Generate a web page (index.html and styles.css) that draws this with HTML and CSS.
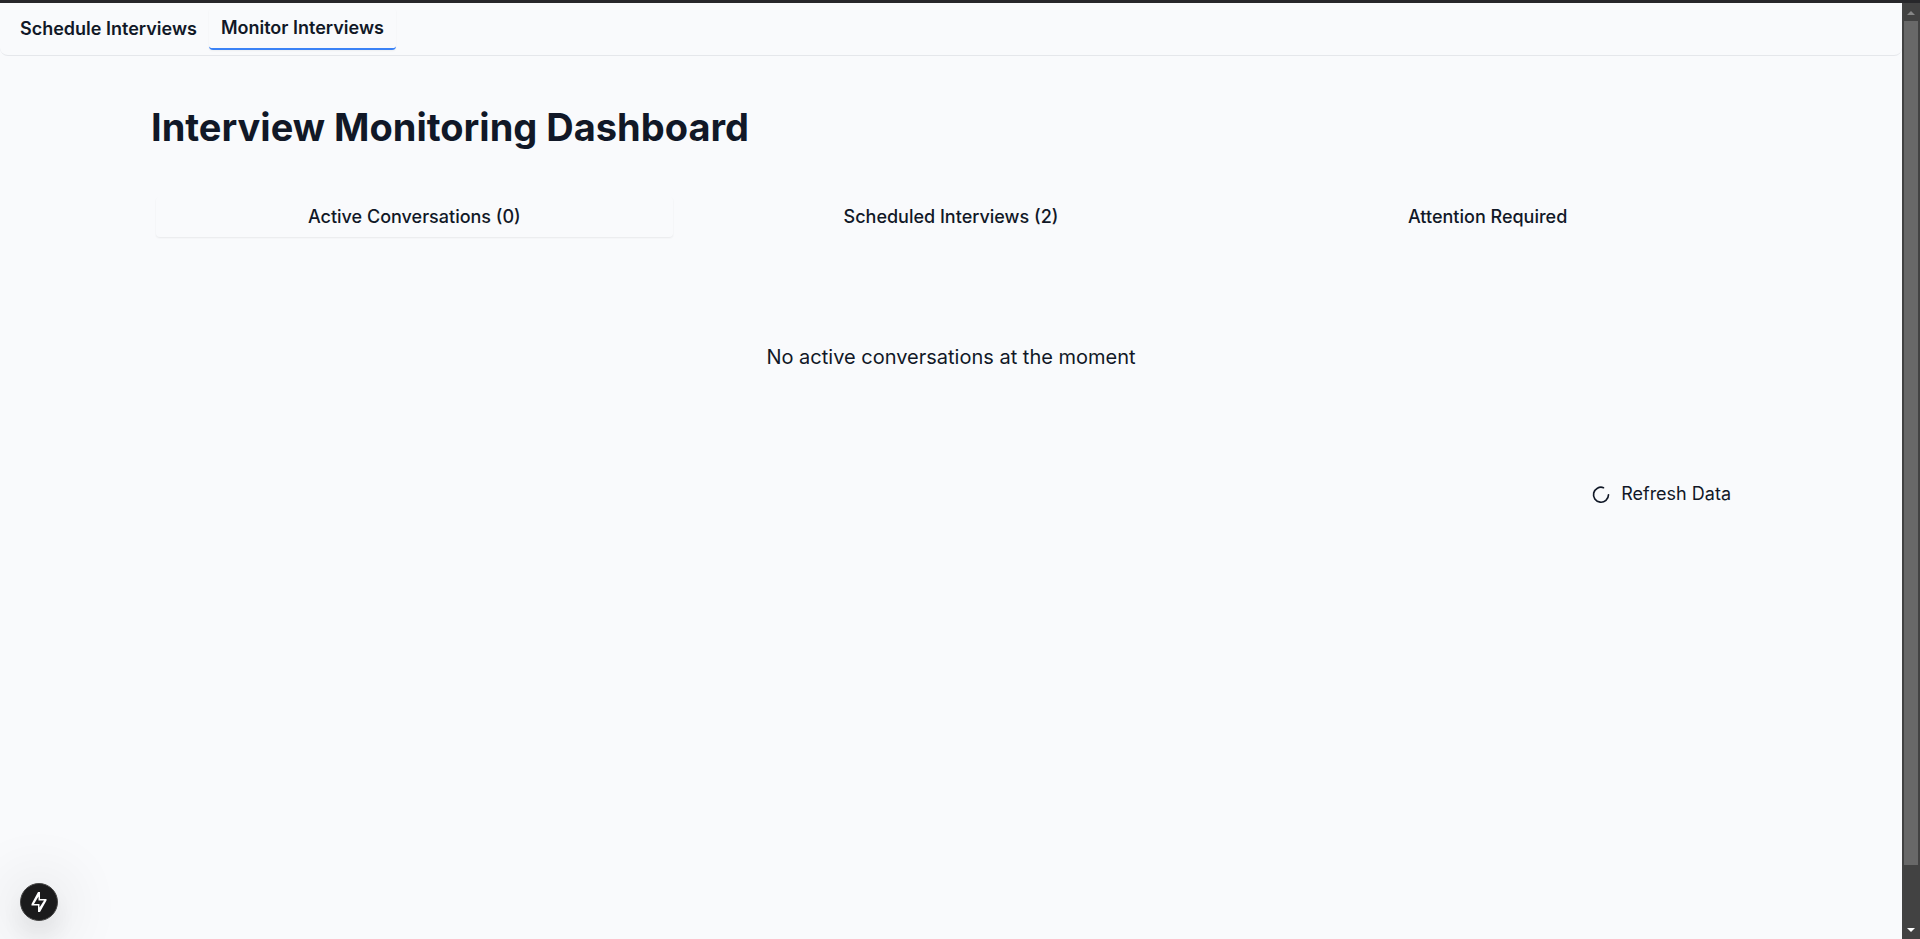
FILE: index.html
```html
<!DOCTYPE html>
<html lang="en">
<head>
<meta charset="utf-8">
<meta name="viewport" content="width=device-width, initial-scale=1">
<title>Interview Monitoring Dashboard</title>
<link rel="stylesheet" href="styles.css">
</head>
<body>
<div class="window">
  <div class="page">
    <nav class="topnav" aria-label="Main">
      <a class="topnav-link" href="#schedule">Schedule Interviews</a>
      <a class="topnav-link topnav-link-active" href="#monitor" aria-current="page">Monitor Interviews</a>
    </nav>
    <main class="content">
      <h1 class="title">Interview Monitoring Dashboard</h1>
      <div class="tabs" role="tablist">
        <button class="tab tab-active" type="button" role="tab" aria-selected="true">Active Conversations (0)</button>
        <button class="tab" type="button" role="tab" aria-selected="false">Scheduled Interviews (2)</button>
        <button class="tab" type="button" role="tab" aria-selected="false">Attention Required</button>
      </div>
      <p class="empty">No active conversations at the moment</p>
      <div class="actions">
        <button class="refresh" type="button">
          <svg class="refresh-icon" viewBox="0 0 24 24" fill="none" stroke="currentColor" stroke-width="2" stroke-linecap="round" stroke-linejoin="round" aria-hidden="true"><path d="M15 4.400A9 9 0 1 0 21 13"/></svg>
          Refresh Data
        </button>
      </div>
    </main>
  </div>
  <div class="scrollbar" aria-hidden="true">
    <svg class="arrow arrow-up" viewBox="0 0 8 4"><path d="M4 0 8 4H0Z"/></svg>
    <div class="thumb"></div>
    <svg class="arrow arrow-down" viewBox="0 0 8 4"><path d="M0 0H8L4 4Z"/></svg>
  </div>
</div>
<button class="devtools" type="button" aria-label="Developer tools">
  <svg class="bolt" viewBox="0 0 16 20" fill="currentColor" fill-rule="evenodd" aria-hidden="true"><path d="M7 0H9V7H15.500V8.500L9 20H7V13.500H.5V12ZM7.500 4.500 3 12H8.500V15.500L13 8.500H7.500Z"/></svg>
</button>
</body>
</html>
```
FILE: styles.css
```css
* { box-sizing: border-box; }

body {
  margin: 0;
  background: #f9fafc;
  color: #111827;
  font-family: Inter, "Liberation Sans", sans-serif;
  font-size: 18px;
  line-height: 24px;
}

button {
  border: 0;
  background: none;
  color: inherit;
  font: inherit;
  cursor: pointer;
}

.window {
  display: flex;
  min-height: 100vh;
  border-top: 3px solid #27272a;
}

.page { flex: 1; min-width: 0; }

.topnav {
  display: flex;
  align-items: flex-start;
  padding: 5px 8px;
  border-bottom: 1px solid #e5e7eb;
  border-radius: 0 0 8px 8px;
}

.topnav-link {
  padding: 9px 12px;
  border-radius: 4px;
  color: inherit;
  font-weight: 600;
  text-decoration: none;
}

.topnav-link-active {
  padding: 8px 12px;
  border-bottom: 2px solid #3b82f6;
  box-shadow: 0 1px 2px rgba(0, 0, 0, 0.05);
}

.content {
  max-width: 1680px;
  margin: 0 auto;
  padding: 48px 40px;
}

.title {
  margin: 0 0 42px;
  font-size: 38px;
  line-height: 46px;
  font-weight: 700;
}

.tabs {
  display: grid;
  grid-template-columns: repeat(3, 1fr);
  gap: 20px;
  padding: 5px;
}

.tab {
  padding: 8px 15px;
  border-radius: 4px;
  font-weight: 500;
}

.tab-active { box-shadow: 0 1px 2px rgba(0, 0, 0, 0.07); }

.empty {
  margin: 0;
  padding: 100px 0;
  font-size: 20px;
  line-height: 30px;
  text-align: center;
}

.actions { display: flex; justify-content: flex-end; }

.refresh {
  display: flex;
  align-items: center;
  gap: 10px;
  padding: 10px 20px;
}

.refresh-icon { width: 20px; height: 20px; }

.scrollbar {
  display: flex;
  flex-direction: column;
  align-items: center;
  width: 18px;
  background: #424242;
}

.arrow { width: 8px; height: 4px; }
.arrow-up { margin: 8px 0 6px; fill: #868686; }
.arrow-down { margin: auto 0 7px; fill: #fff; }

.thumb {
  width: 14px;
  flex: 0 0 90.2%;
  background: #686868;
}

.devtools {
  position: fixed;
  left: 20px;
  bottom: 18px;
  display: grid;
  place-items: center;
  width: 38px;
  height: 38px;
  padding: 0;
  border: 1px solid #444;
  border-radius: 50%;
  background: #1b1b1c;
  color: #fff;
  box-shadow: 0 16px 32px -8px rgba(0, 0, 0, 0.24), 0 4px 64px 4px rgba(0, 0, 0, 0.16);
}

.bolt { width: 16px; height: 20px; }
```
